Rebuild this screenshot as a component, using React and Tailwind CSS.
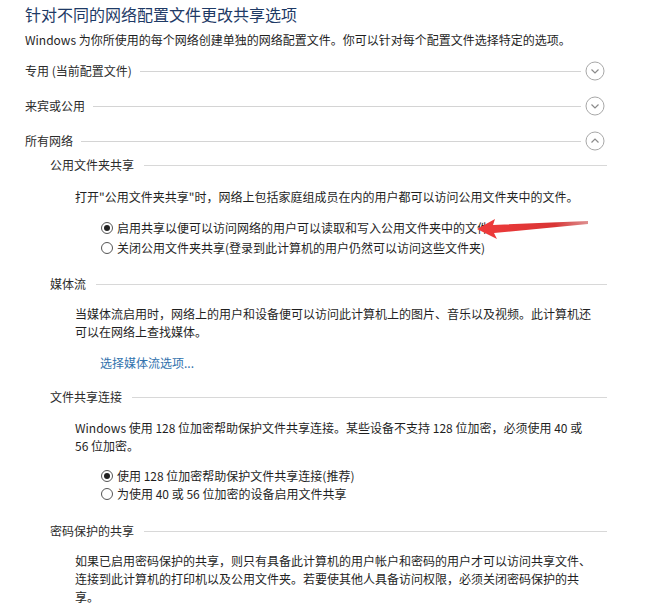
import React from 'react';

const Chevron = ({up}) => {
	return (
		<svg width="20" height="20" viewBox="0 0 20 20" className="shrink-0">
			<circle cx="10" cy="10" r="9" fill="none" stroke="#a8a8a8" strokeWidth="1" />
			{up
				? <path d="M6.5 11.5 L10 8 L13.5 11.5" fill="none" stroke="#8a8a8a" strokeWidth="1.2" />
				: <path d="M6.5 8.5 L10 12 L13.5 8.5" fill="none" stroke="#8a8a8a" strokeWidth="1.2" />
			}
		</svg>
	);
};

const ProfileRow = ({label, up, className}) => {
	return (
		<div className={`flex items-center h-[20px] ${className}`}>
			<span className="text-[12px] text-[#2b2b2b] whitespace-nowrap">{label}</span>
			<div className="flex-1 h-px bg-[#d4d4d4] ml-[8px] mr-[4px]" />
			<Chevron up={up} />
			<div className="w-[2px]" />
		</div>
	);
};

const SubHead = ({label, className}) => {
	return (
		<div className={`flex items-center h-[18px] pl-[25px] ${className}`}>
			<span className="text-[12px] text-[#2b2b2b] whitespace-nowrap">{label}</span>
			<div className="flex-1 h-px bg-[#d8d8d8] ml-[10px]" />
		</div>
	);
};

const Radio = ({checked, label}) => {
	return (
		<div className="flex items-center">
			<span className="w-[12px] h-[12px] rounded-full border border-[#555] bg-white flex items-center justify-center shrink-0">
				{checked ? <span className="w-[6px] h-[6px] rounded-full bg-[#222]" /> : null}
			</span>
			<span className="ml-[4px] whitespace-nowrap">{label}</span>
		</div>
	);
};

const Arrow = () => {
	return (
		<svg
			className="absolute left-[470px] top-[212px]"
			width="125"
			height="30"
			viewBox="0 0 125 30"
		>
			<defs>
				<linearGradient id="ar" x1="0" y1="0" x2="1" y2="0">
					<stop offset="0" stopColor="#f03a3a" />
					<stop offset="0.7" stopColor="#d93535" />
					<stop offset="1" stopColor="#c94545" stopOpacity="0.6" />
				</linearGradient>
			</defs>
			<polygon
				points="7,17 25,7 23,13 118,9 118,12 24,21 27,27"
				fill="url(#ar)"
			/>
		</svg>
	);
};

const App = () => {
	return (
		<div className="relative w-[670px] h-[608px] bg-white overflow-hidden font-['Noto_Sans_CJK_SC',sans-serif] text-[#1f1f1f]">
			<div className="w-[582px] ml-[25px]">
				<div className="pt-[4px] text-[16px] leading-[20px] text-[#1e3a66] whitespace-nowrap">
					针对不同的网络配置文件更改共享选项
				</div>
				<div className="mt-[7px] text-[12px] leading-[18px] whitespace-nowrap">
					Windows 为你所使用的每个网络创建单独的网络配置文件。你可以针对每个配置文件选择特定的选项。
				</div>

				<ProfileRow label="专用 (当前配置文件)" className="mt-[12px]" />
				<ProfileRow label="来宾或公用" className="mt-[15px]" />
				<ProfileRow label="所有网络" up className="mt-[15px]" />

				<SubHead label="公用文件夹共享" className="mt-[5px]" />
				<div className="mt-[14px] pl-[50px] text-[12px] leading-[18px] whitespace-nowrap">
					打开"公用文件夹共享"时，网络上包括家庭组成员在内的用户都可以访问公用文件夹中的文件。
				</div>
				<div className="mt-[12px] pl-[76px] text-[12px] leading-[20px]">
					<Radio checked label="启用共享以便可以访问网络的用户可以读取和写入公用文件夹中的文件" />
					<Radio label="关闭公用文件夹共享(登录到此计算机的用户仍然可以访问这些文件夹)" />
				</div>

				<SubHead label="媒体流" className="mt-[17px]" />
				<div className="mt-[12px] pl-[50px] text-[12px] leading-[18px] whitespace-nowrap">
					当媒体流启用时，网络上的用户和设备便可以访问此计算机上的图片、音乐以及视频。此计算机还
					<br />
					可以在网络上查找媒体。
				</div>
				<div className="mt-[13px] pl-[75px] text-[12px] leading-[18px] text-[#3272ad]">
					选择媒体流选项...
				</div>

				<SubHead label="文件共享连接" className="mt-[16px]" />
				<div className="mt-[13px] pl-[50px] text-[12px] leading-[18px] whitespace-nowrap">
					Windows 使用 128 位加密帮助保护文件共享连接。某些设备不支持 128 位加密，必须使用 40 或
					<br />
					56 位加密。
				</div>
				<div className="mt-[12px] pl-[76px] text-[12px] leading-[18px]">
					<Radio checked label="使用 128 位加密帮助保护文件共享连接(推荐)" />
					<Radio label="为使用 40 或 56 位加密的设备启用文件共享" />
				</div>

				<SubHead label="密码保护的共享" className="mt-[19px]" />
				<div className="mt-[12px] pl-[50px] text-[12px] leading-[18px] whitespace-nowrap">
					如果已启用密码保护的共享，则只有具备此计算机的用户帐户和密码的用户才可以访问共享文件、
					<br />
					连接到此计算机的打印机以及公用文件夹。若要使其他人具备访问权限，必须关闭密码保护的共
					<br />
					享。
				</div>
			</div>
			<Arrow />
		</div>
	);
};

export default App;
